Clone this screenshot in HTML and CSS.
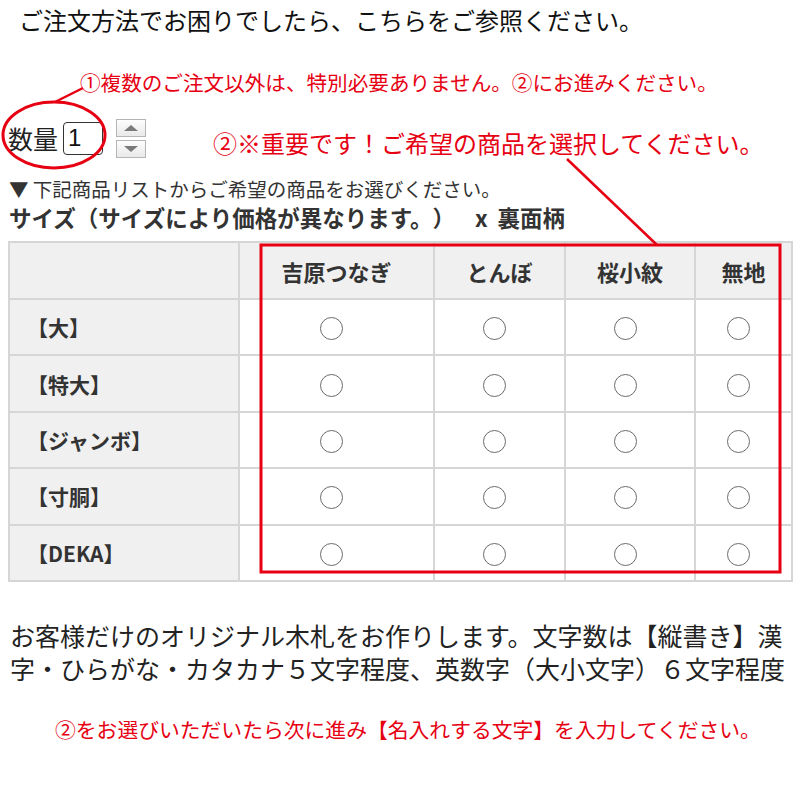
FILE: index.html
```
<!DOCTYPE html>
<html lang="ja">
<head>
<meta charset="utf-8">
<title>ご注文方法</title>
<link rel="stylesheet" href="styles.css">
</head>
<body>
<div class="page">
  <p class="title">ご注文方法でお困りでしたら、こちらをご参照ください。</p>
  <p class="note note1">①複数のご注文以外は、特別必要ありません。②にお進みください。</p>
  <div class="qty-row">
    <span class="qty-label">数量</span>
    <span class="qty-input">1</span>
    <span class="spin">
      <span class="spin-btn"><span class="tri-up"></span></span>
      <span class="spin-btn"><span class="tri-down"></span></span>
    </span>
    <span class="note note2">②※重要です！ご希望の商品を選択してください。</span>
  </div>
  <p class="hint">▼ 下記商品リストからご希望の商品をお選びください。</p>
  <p class="heading">サイズ（サイズにより価格が異なります。）<span class="times">x</span>裏面柄</p>
  <table class="grid">
    <colgroup>
      <col class="c1"><col class="c2"><col class="c3"><col class="c4"><col class="c5">
    </colgroup>
    <thead>
      <tr><th></th><th>吉原つなぎ</th><th>とんぼ</th><th>桜小紋</th><th>無地</th></tr>
    </thead>
    <tbody>
      <tr><th>【大】</th><td><input type="radio" name="o"></td><td><input type="radio" name="o"></td><td><input type="radio" name="o"></td><td><input type="radio" name="o"></td></tr>
      <tr><th>【特大】</th><td><input type="radio" name="o"></td><td><input type="radio" name="o"></td><td><input type="radio" name="o"></td><td><input type="radio" name="o"></td></tr>
      <tr><th>【ジャンボ】</th><td><input type="radio" name="o"></td><td><input type="radio" name="o"></td><td><input type="radio" name="o"></td><td><input type="radio" name="o"></td></tr>
      <tr><th>【寸胴】</th><td><input type="radio" name="o"></td><td><input type="radio" name="o"></td><td><input type="radio" name="o"></td><td><input type="radio" name="o"></td></tr>
      <tr><th>【DEKA】</th><td><input type="radio" name="o"></td><td><input type="radio" name="o"></td><td><input type="radio" name="o"></td><td><input type="radio" name="o"></td></tr>
    </tbody>
  </table>
  <p class="desc">お客様だけのオリジナル木札をお作りします。文字数は【縦書き】漢字・ひらがな・カタカナ５文字程度、英数字（大小文字）６文字程度</p>
  <p class="note note3">②をお選びいただいたら次に進み【名入れする文字】を入力してください。</p>

  <svg class="annot" width="800" height="800" viewBox="0 0 800 800" aria-hidden="true">
    <ellipse cx="54" cy="135" rx="51" ry="33" fill="none" stroke="#e60012" stroke-width="3"/>
    <line x1="55" y1="102" x2="83" y2="88" stroke="#e60012" stroke-width="2.5"/>
    <line x1="567" y1="159" x2="657" y2="245" stroke="#e60012" stroke-width="2.5"/>
    <rect x="261" y="245" width="519" height="327" fill="none" stroke="#e60012" stroke-width="3"/>
  </svg>
</div>
</body>
</html>
```
FILE: styles.css
```
* { box-sizing: border-box; }
html, body { margin: 0; padding: 0; background: #fff; }
body {
  font-family: "Noto Sans CJK JP", "Noto Sans", sans-serif;
  color: #222;
  text-spacing-trim: space-all;
}
.page {
  position: relative;
  width: 800px;
  height: 800px;
  overflow: hidden;
}
p { margin: 0; }

.title {
  margin: 5px 0 0 19px;
  font-size: 24px;
  line-height: 30px;
  color: #111;
  white-space: nowrap;
}
.note {
  color: #e60012;
  white-space: nowrap;
}
.note1 {
  margin: 33px 0 0 80px;
  font-size: 20.6px;
  line-height: 28px;
}
.qty-row {
  display: flex;
  align-items: center;
  height: 40px;
  margin-top: 22px;
  padding-left: 8px;
}
.qty-label {
  font-size: 25px;
  line-height: 30px;
  color: #222;
  width: 50px;
  white-space: nowrap;
}
.qty-input {
  margin-left: 5px;
  width: 40px;
  height: 33px;
  border: 1.5px solid #333;
  border-radius: 4px;
  font-family: "Liberation Sans", sans-serif;
  font-size: 24px;
  line-height: 30px;
  padding-left: 4px;
  color: #111;
}
.spin {
  margin-left: 13px;
  display: flex;
  flex-direction: column;
  gap: 3px;
}
.spin-btn {
  width: 30px;
  height: 18px;
  border: 1.5px solid #b5b5b5;
  background: linear-gradient(#fdfdfd, #e9e9e9);
  display: flex;
  align-items: center;
  justify-content: center;
}
.tri-up {
  width: 0; height: 0;
  border-left: 7px solid transparent;
  border-right: 7px solid transparent;
  border-bottom: 6px solid #7a7a7a;
}
.tri-down {
  width: 0; height: 0;
  border-left: 7px solid transparent;
  border-right: 7px solid transparent;
  border-top: 6px solid #7a7a7a;
}
.note2 {
  margin-left: 67px;
  margin-top: 10px;
  font-size: 24px;
  line-height: 30px;
}
.hint {
  margin: 19px 0 0 9px;
  font-size: 19.5px;
  line-height: 24px;
  color: #333;
  white-space: nowrap;
}
.heading {
  margin: 2px 0 0 9px;
  height: 28px;
  font-size: 22.5px;
  line-height: 28px;
  font-weight: bold;
  color: #333;
  white-space: nowrap;
}
.heading .times {
  margin: 0 10px 0 20px;
}
.grid {
  margin: 10px 0 0 8px;
  width: 783px;
  border-collapse: collapse;
  table-layout: fixed;
  border: 2px solid #d6d6d6;
}
.grid .c1 { width: 230px; }
.grid .c2 { width: 195px; }
.grid .c3 { width: 131px; }
.grid .c4 { width: 130px; }
.grid .c5 { width: 97px; }
.grid th, .grid td {
  border: 2px solid #d6d6d6;
  padding: 0;
}
.grid thead th {
  height: 57px;
  background: #f0f0f0;
  font-size: 22px;
  font-weight: bold;
  color: #333;
  text-align: center;
}
.grid tbody tr { height: 56.4px; }
.grid tbody th {
  background: #f0f0f0;
  font-size: 21px;
  font-weight: bold;
  color: #333;
  text-align: left;
  padding-left: 17px;
  white-space: nowrap;
}
.grid tbody td {
  text-align: center;
  background: #fff;
}
.grid input[type="radio"] {
  appearance: none;
  -webkit-appearance: none;
  width: 23px;
  height: 23px;
  margin: 0 10px 0 0;
  border: 1.5px solid #6b6b6b;
  border-radius: 50%;
  background: #fff;
  vertical-align: middle;
}
.desc {
  margin: 37px 0 0 10px;
  width: 782px;
  font-size: 25px;
  line-height: 33px;
  color: #222;
}
.note3 {
  margin: 30px 0 0 55px;
  font-size: 20.8px;
  line-height: 28px;
}
.annot {
  position: absolute;
  top: 0;
  left: 0;
  pointer-events: none;
}
```
